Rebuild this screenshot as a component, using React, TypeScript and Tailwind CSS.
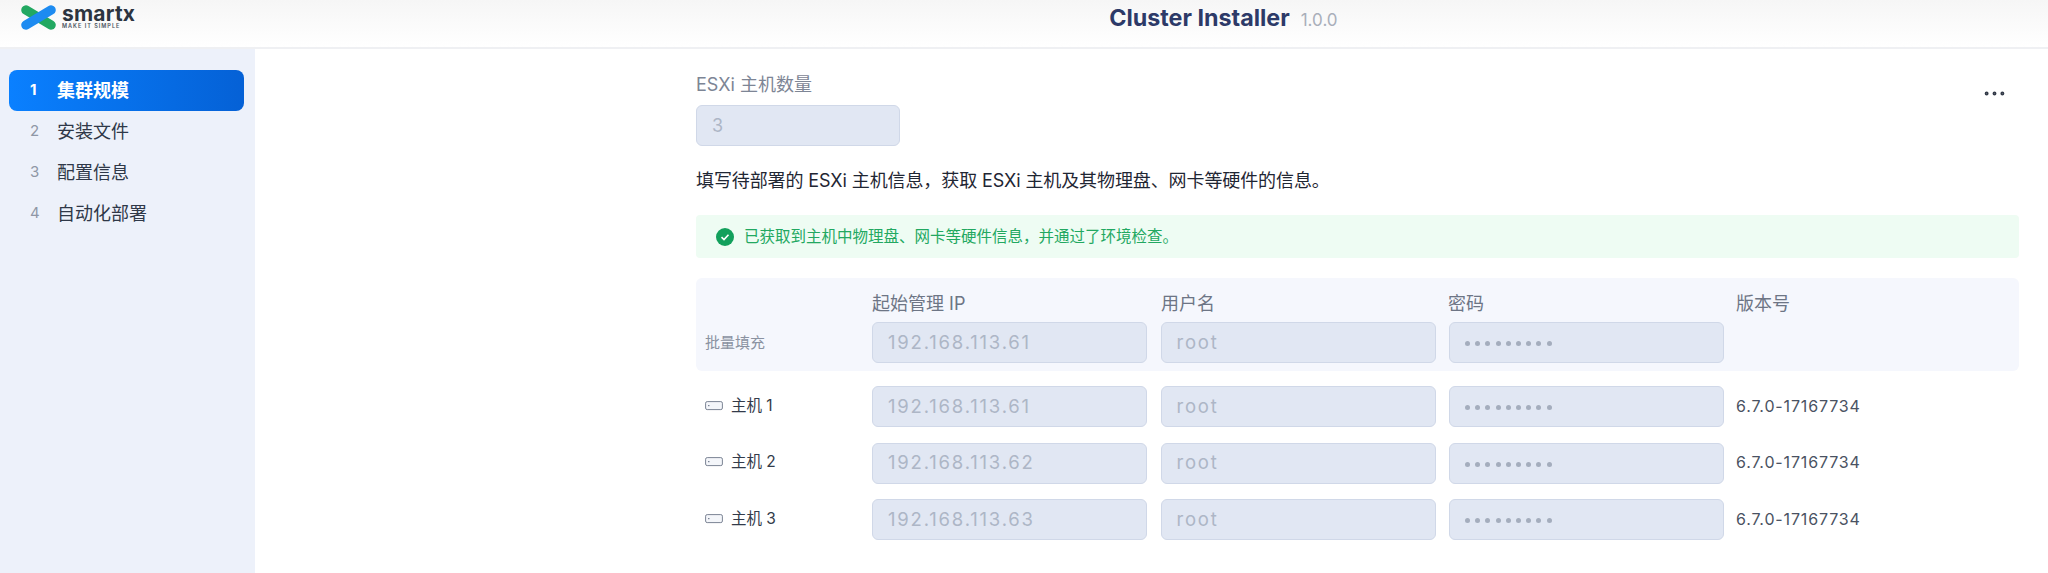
import { Ellipsis } from "lucide-react";

const font = "font-['Inter','Noto_Sans_CJK_SC',sans-serif]";

const steps = ["集群规模", "安装文件", "配置信息", "自动化部署"];

const hosts = [
  { name: "主机 1", ip: "192.168.113.61" },
  { name: "主机 2", ip: "192.168.113.62" },
  { name: "主机 3", ip: "192.168.113.63" },
];

function Logo() {
  return (
    <div className="flex items-start gap-[6px]">
      <svg width="35" height="27" viewBox="0 0 35 27" className="mt-[4px]" aria-hidden="true">
        <path d="M5 6 L30 21" stroke="#22a861" strokeWidth="9.5" strokeLinecap="round" />
        <path d="M5 21 L30 6" stroke="#1d8bf1" strokeWidth="9.5" strokeLinecap="round" />
      </svg>
      <div className="flex flex-col pt-[4px]">
        <span className="text-[21px] leading-[19px] font-bold tracking-[0.2px] text-[#2c3440]">smartx</span>
        <span className="text-[5.5px] leading-[6px] font-semibold tracking-[1px] text-[#4a5260]">MAKE IT SIMPLE</span>
      </div>
    </div>
  );
}

function Field({ value, password }: { value: string; password?: boolean }) {
  return (
    <div className="w-[275px] h-[41px] shrink-0 flex items-center px-[15px] rounded-[6px] border border-[#d0d8e8] bg-[#e1e7f3] text-[18.5px] tracking-[1.8px] text-[#adb6c6]">
      {password ? (
        <span className="flex gap-[5.2px] pt-[2px]">
          {Array.from({ length: 9 }).map((_, i) => (
            <span key={i} className="w-[5px] h-[5px] rounded-full bg-[#a4adbd]" />
          ))}
        </span>
      ) : (
        value
      )}
    </div>
  );
}

function HostIcon() {
  return (
    <svg width="18" height="10" viewBox="0 0 18 10" aria-hidden="true">
      <rect x="0.6" y="0.6" width="16.8" height="8" rx="1.6" fill="#f4f6fa" stroke="#7b8494" strokeWidth="1" />
      <rect x="3" y="4" width="1.5" height="1.2" fill="#7b8494" />
    </svg>
  );
}

function Fields({ ip }: { ip: string }) {
  return (
    <div className="flex gap-[13.5px]">
      <Field value={ip} />
      <Field value="root" />
      <Field value="" password />
    </div>
  );
}

function HostRow({ name, ip }: { name: string; ip: string }) {
  return (
    <div className="flex items-center">
      <div className="w-[176px] flex items-center gap-[8px] pl-[9px] pb-[2px] text-[15.5px] text-[#333b4a]">
        <HostIcon />
        {name}
      </div>
      <Fields ip={ip} />
      <div className="pl-[12px] pb-[2px] text-[16px] tracking-[0.85px] text-[#4a5262]">6.7.0-17167734</div>
    </div>
  );
}

export default function App() {
  return (
    <div className={`${font} h-[573px] flex flex-col bg-white overflow-hidden relative`}>
      <header className="h-[49px] shrink-0 flex border-b-2 border-[#eff0f3] bg-gradient-to-b from-[#f6f6f6] to-white">
        <div className="pl-[21px]">
          <Logo />
        </div>
        <div className="flex items-baseline gap-[11px] pl-[974px] pt-[2px]">
          <span className="text-[23.3px] leading-[32px] font-bold text-[#2d3a68]">Cluster Installer</span>
          <span className="text-[17px] text-[#a9afba]">1.0.0</span>
        </div>
      </header>

      <div className="flex-1 flex min-h-0">
        <aside className="w-[255px] shrink-0 bg-[#edf1fa] pt-[21px] px-[9px]">
          {steps.map((step, i) => (
            <div
              key={step}
              className={
                i === 0
                  ? "h-[41px] w-[235px] flex items-center rounded-[8px] bg-gradient-to-r from-[#0a80ff] to-[#0561d6] text-white font-bold"
                  : "h-[41px] w-[235px] flex items-center text-[#2f3848]"
              }
            >
              <span className={`w-[48px] pl-[21px] text-[15px] ${i === 0 ? "text-white" : "text-[#8f97a6]"}`}>{i + 1}</span>
              <span className="text-[18px]">{step}</span>
            </div>
          ))}
        </aside>

        <main className="flex-1 pl-[441px] pt-[23px]">
          <div className="w-[1323px]">
            <div className="text-[18px] leading-[26px] text-[#7d8595]">ESXi 主机数量</div>
            <div className="mt-[7px] w-[204px] h-[41px] flex items-center px-[15px] rounded-[6px] border border-[#d0d8e8] bg-[#e1e7f3] text-[18px] text-[#adb6c6]">
              3
            </div>
            <p className="mt-[21px] text-[18px] leading-[28px] tracking-[-0.1px] text-[#1f2633]">
              填写待部署的 ESXi 主机信息，获取 ESXi 主机及其物理盘、网卡等硬件的信息。
            </p>
            <div className="mt-[20px] h-[43px] flex items-center gap-[10px] pl-[20px] rounded-[4px] bg-[#eefcf3] text-[15.5px] text-[#22a861]">
              <svg width="18" height="18" viewBox="0 0 18 18" aria-hidden="true">
                <circle cx="9" cy="9" r="9" fill="#12a05c" />
                <path d="M5.5 9.2 L8 11.6 L12.5 6.8" fill="none" stroke="white" strokeWidth="1.6" />
              </svg>
              已获取到主机中物理盘、网卡等硬件信息，并通过了环境检查。
            </div>

            <div className="mt-[20px] h-[93px] rounded-[6px] bg-[#f5f7fd]">
              <div className="flex h-[44px] items-center pt-[6px] text-[18px] text-[#6d7585]">
                <div className="w-[176px]" />
                <div className="w-[289px]">起始管理 IP</div>
                <div className="w-[287px]">用户名</div>
                <div className="w-[288px]">密码</div>
                <div>版本号</div>
              </div>
              <div className="flex items-center">
                <div className="w-[176px] pl-[9px] pt-[1px] text-[15px] text-[#8a92a1]">批量填充</div>
                <Fields ip="192.168.113.61" />
              </div>
            </div>

            <div className="mt-[15px] flex flex-col gap-[15.5px]">
              {hosts.map((h) => (
                <HostRow key={h.name} name={h.name} ip={h.ip} />
              ))}
            </div>
          </div>
        </main>
      </div>

      <Ellipsis className="absolute left-[1981px] top-[80px] text-[#333a48]" size={27} strokeWidth={1.5} />
    </div>
  );
}
